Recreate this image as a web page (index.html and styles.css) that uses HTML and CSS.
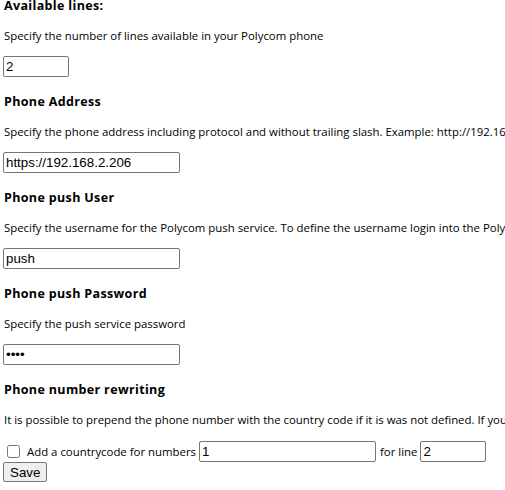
FILE: index.html
```html
<!DOCTYPE html>
<html lang="en">
<head>
<meta charset="utf-8">
<title>Polycom settings</title>
<link rel="stylesheet" href="styles.css">
</head>
<body>
<form class="settings">
  <div class="section">
    <h4 class="heading">Available lines:</h4>
    <p class="desc">Specify the number of lines available in your Polycom phone</p>
    <input class="field field-short" type="text" value="2">
  </div>
  <div class="section">
    <h4 class="heading">Phone Address</h4>
    <p class="desc">Specify the phone address including protocol and without trailing slash. Example: http://192.168.2.206</p>
    <input class="field" type="text" value="https://192.168.2.206">
  </div>
  <div class="section">
    <h4 class="heading">Phone push User</h4>
    <p class="desc">Specify the username for the Polycom push service. To define the username login into the Polycom web interface.</p>
    <input class="field" type="text" value="push">
  </div>
  <div class="section">
    <h4 class="heading">Phone push Password</h4>
    <p class="desc">Specify the push service password</p>
    <input class="field" type="password" value="push">
  </div>
  <div class="section last">
    <h4 class="heading">Phone number rewriting</h4>
    <p class="desc">It is possible to prepend the phone number with the country code if it is was not defined. If you want to do this, enable it here.</p>
    <div class="row">
      <input class="check" type="checkbox">
      <span class="label">Add a countrycode for numbers</span>
      <input class="field" type="text" value="1">
      <span class="label">for line</span>
      <input class="field field-short" type="text" value="2">
    </div>
  </div>
  <button class="btn" type="button">Save</button>
</form>
</body>
</html>
```
FILE: styles.css
```css
html, body {
  margin: 0;
  padding: 0;
  background: #ffffff;
  overflow: hidden;
}
.settings {
  padding: 0 3px;
  font-family: "Open Sans", "Noto Sans", sans-serif;
  color: #000;
  white-space: nowrap;
}
.section {
  margin-bottom: 19px;
}
.section.last {
  margin-bottom: 0;
}
.heading {
  margin: 0;
  padding-left: 1px;
  font-size: 12.5px;
  letter-spacing: 0.35px;
  font-weight: 700;
  line-height: 12px;
}
.desc {
  margin: 16px 0 12px;
  padding-left: 1px;
  font-size: 11.4px;
  line-height: 16px;
}
.field {
  display: block;
  box-sizing: border-box;
  width: 177px;
  height: 21px;
  margin: 0;
  padding: 1px 2px;
  border: 1px solid #767676;
  border-radius: 2px;
  font-family: "Liberation Sans", Arial, sans-serif;
  font-size: 13.333px;
  color: #000;
  background: #fff;
}
.field-short {
  width: 66px;
}
.row {
  display: flex;
  align-items: center;
  margin-top: 13px;
  height: 21px;
}
.check {
  width: 13px;
  height: 13px;
  margin: 0 3px 0 4px;
}
.label {
  font-size: 11.4px;
  line-height: 16px;
  margin: 0 3px 0 4px;
}
.btn {
  display: block;
  box-sizing: border-box;
  height: 20px;
  margin: 0;
  padding: 1px 6px;
  border: 1px solid #767676;
  border-radius: 2px;
  background: #efefef;
  font-family: "Liberation Sans", Arial, sans-serif;
  font-size: 13.333px;
  color: #000;
}
```
